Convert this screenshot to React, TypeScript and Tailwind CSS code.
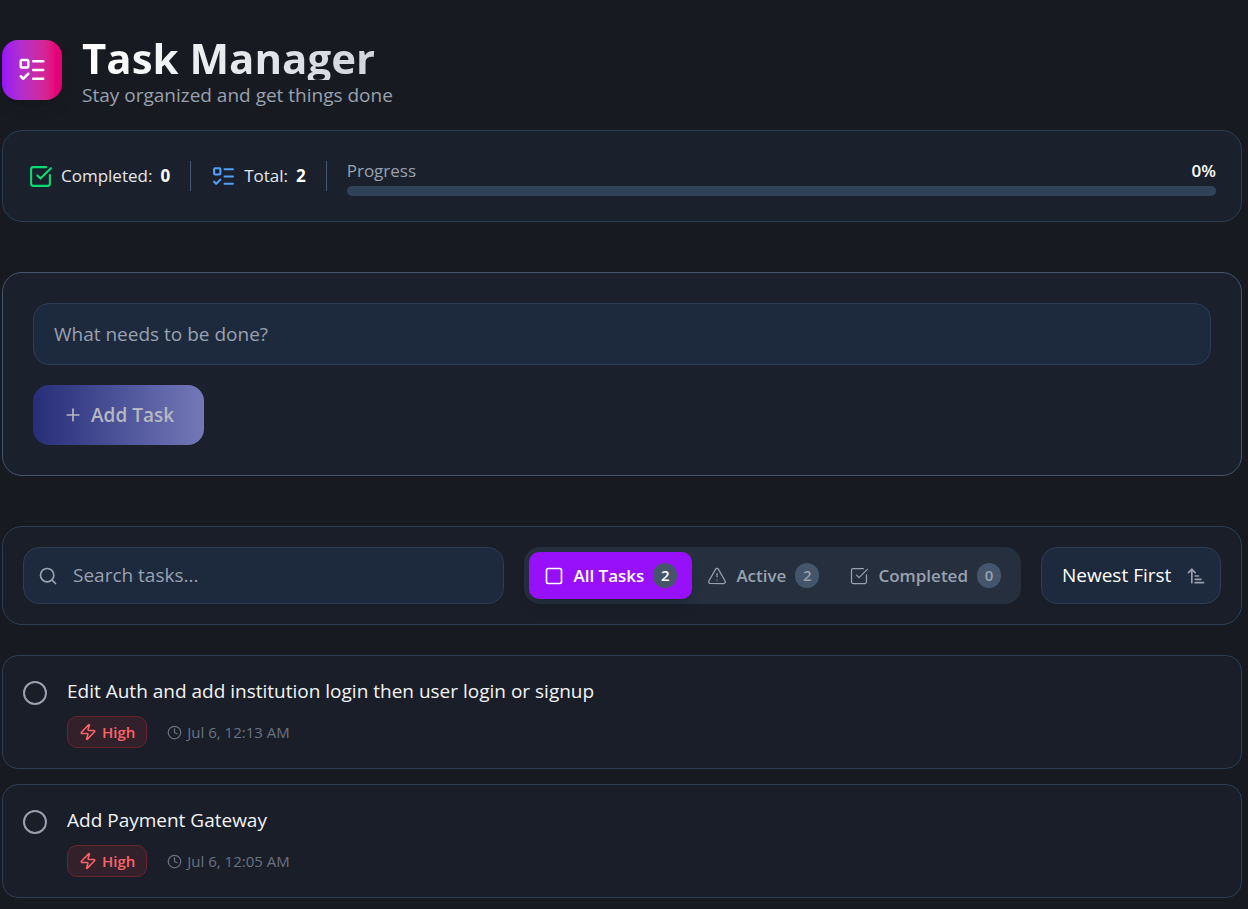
import { useState } from "react";
import {
  ArrowUpNarrowWide,
  Clock,
  ListTodo,
  Plus,
  Search,
  Square,
  SquareCheckBig,
  TriangleAlert,
  Zap,
} from "lucide-react";

type Task = { id: number; title: string; created: string; order: number; done: boolean };
type Filter = "all" | "active" | "completed";

const initialTasks: Task[] = [
  {
    id: 1,
    title: "Edit Auth and add institution login then user login or signup",
    created: "Jul 6, 12:13 AM",
    order: 2,
    done: false,
  },
  { id: 2, title: "Add Payment Gateway", created: "Jul 6, 12:05 AM", order: 1, done: false },
];

function Header() {
  return (
    <header className="flex items-start gap-5">
      <div className="mt-[5px] flex size-15 shrink-0 items-center justify-center rounded-2xl bg-linear-to-r from-[#9810fa] to-[#e60076] to-90% shadow-lg">
        <ListTodo className="size-[30px] text-white" />
      </div>
      <div>
        <h1 className="w-fit bg-linear-to-r from-white to-gray-300 bg-clip-text text-[42px] leading-[45px] font-bold text-transparent">
          Task Manager
        </h1>
        <p className="text-[19px] leading-[30px] text-[#99a1af]">Stay organized and get things done</p>
      </div>
    </header>
  );
}

function Stats({ done, total }: { done: number; total: number }) {
  const percent = total ? Math.round((done / total) * 100) : 0;
  return (
    <section className="mt-5 flex items-center gap-5 rounded-[20px] border border-[#2d3d54] bg-[#1a212d] p-[25px]">
      <div className="flex items-center gap-2 text-[17px] leading-[30px]">
        <SquareCheckBig className="size-[25px] text-[#05df72]" />
        <span className="text-gray-200">Completed:</span>
        <span className="font-bold text-white">{done}</span>
      </div>
      <div className="h-[30px] w-px bg-[#45556c]" />
      <div className="flex items-center gap-2 text-[17px] leading-[30px]">
        <ListTodo className="size-[25px] text-[#51a2ff]" />
        <span className="text-gray-200">Total:</span>
        <span className="font-bold text-white">{total}</span>
      </div>
      <div className="h-[30px] w-px bg-[#45556c]" />
      <div className="flex-1">
        <div className="flex justify-between text-[17px] leading-[30px]">
          <span className="text-[#99a1af]">Progress</span>
          <span className="font-semibold text-white">{percent}%</span>
        </div>
        <div className="h-2.5 overflow-hidden rounded-full bg-[#314158]">
          <div className="h-full bg-[#9810fa]" style={{ width: `${percent}%` }} />
        </div>
      </div>
    </section>
  );
}

export default function App() {
  const [tasks, setTasks] = useState(initialTasks);
  const [draft, setDraft] = useState("");
  const [query, setQuery] = useState("");
  const [filter, setFilter] = useState<Filter>("all");
  const [sort, setSort] = useState("newest");

  const done = tasks.filter((t) => t.done).length;
  const tabs = [
    { key: "all" as Filter, label: "All Tasks", icon: Square, count: tasks.length },
    { key: "active" as Filter, label: "Active", icon: TriangleAlert, count: tasks.length - done },
    { key: "completed" as Filter, label: "Completed", icon: SquareCheckBig, count: done },
  ];
  const visible = tasks
    .filter((t) => filter === "all" || (filter === "completed") === t.done)
    .filter((t) => t.title.toLowerCase().includes(query.toLowerCase()))
    .sort((a, b) => (sort === "newest" ? b.order - a.order : a.order - b.order));

  const addTask = () => {
    const id = Date.now();
    setTasks([...tasks, { id, title: draft.trim(), created: "Just now", order: id, done: false }]);
    setDraft("");
  };

  return (
    <main className="min-h-screen bg-[#171b21] pt-[35px] pr-1.5 pb-[11px] pl-0.5 font-['Open_Sans','Noto_Sans',sans-serif]">
      <Header />
      <Stats done={done} total={tasks.length} />

      <form
        className="mt-[50px] rounded-[20px] border border-[#45556c] bg-[#1a202c] p-[30px]"
        onSubmit={(e) => {
          e.preventDefault();
          addTask();
        }}
      >
        <input
          aria-label="New task"
          className="block h-[62px] w-full rounded-2xl border border-[#2d3d54] bg-[#1d293d] px-5 text-[19px] text-white outline-none placeholder:text-[#99a1af]"
          placeholder="What needs to be done?"
          value={draft}
          onChange={(e) => setDraft(e.target.value)}
        />
        <button
          type="submit"
          disabled={!draft.trim()}
          className="mt-5 flex h-15 items-center gap-2 rounded-2xl bg-linear-to-r from-[#372aac] to-[#a3a8ff] px-[30px] text-[19px] font-semibold text-white disabled:from-[#282d78] disabled:to-[#7478b7] disabled:text-[#b5b8c0]"
        >
          <Plus className="size-5" />
          Add Task
        </button>
      </form>

      <section className="mt-[50px] flex items-center gap-5 rounded-[20px] border border-[#2d3d54] bg-[#191e29] p-5">
        <label className="flex h-[57px] min-w-0 flex-1 items-center gap-[15px] rounded-2xl border border-[#2d3d54] bg-[#1d293d] px-3.5">
          <Search className="size-5 shrink-0 text-[#99a1af]" />
          <input
            aria-label="Search tasks"
            className="w-full min-w-0 bg-transparent text-[19px] text-white outline-none placeholder:text-[#99a1af]"
            placeholder="Search tasks..."
            value={query}
            onChange={(e) => setQuery(e.target.value)}
          />
        </label>
        <div className="flex h-[57px] rounded-2xl bg-[#252f3e] p-[5px]">
          {tabs.map(({ key, label, icon: Icon, count }) => (
            <button
              key={key}
              type="button"
              aria-pressed={filter === key}
              onClick={() => setFilter(key)}
              className={`flex items-center gap-[9px] rounded-[10px] px-[15px] text-[17px] font-semibold ${
                filter === key ? "bg-[#9810fa] text-white shadow-lg" : "text-[#99a1af]"
              }`}
            >
              <Icon className="size-5" strokeWidth={filter === key ? 2 : 1.5} />
              {label}
              <span className="min-w-6 rounded-full bg-[#45556c] px-[7px] text-center text-[15px] leading-[25px]">
                {count}
              </span>
            </button>
          ))}
        </div>
        <div className="grid h-[57px] w-[180px] items-center rounded-2xl border border-[#2d3d54] bg-[#1d293d]">
          <select
            aria-label="Sort order"
            className="col-start-1 row-start-1 h-full w-full appearance-none rounded-2xl bg-transparent pl-5 text-[19px] font-medium text-white outline-none"
            value={sort}
            onChange={(e) => setSort(e.target.value)}
          >
            <option value="newest">Newest First</option>
            <option value="oldest">Oldest First</option>
          </select>
          <ArrowUpNarrowWide className="pointer-events-none col-start-1 row-start-1 mr-3.5 size-5 justify-self-end text-[#99a1af]" />
        </div>
      </section>

      <ul className="mt-[30px] flex flex-col gap-[15px]">
        {visible.map((task) => (
          <li
            key={task.id}
            className="flex items-start gap-5 rounded-2xl border border-[#2d3d54] bg-[#191e29] p-5"
          >
            <input
              type="checkbox"
              id={`task-${task.id}`}
              checked={task.done}
              onChange={() =>
                setTasks(tasks.map((t) => (t.id === task.id ? { ...t, done: !t.done } : t)))
              }
              className="mt-[5px] size-6 shrink-0 appearance-none rounded-full border-2 border-[#99a1af] checked:border-[#05df72] checked:bg-[#05df72]"
            />
            <div>
              <label
                htmlFor={`task-${task.id}`}
                className="block text-[19px] leading-[30px] font-medium text-gray-100"
              >
                {task.title}
              </label>
              <div className="mt-2.5 flex items-center gap-5">
                <span className="flex h-8 items-center gap-[5px] rounded-[10px] border border-[#6d232c] bg-[#32212b] px-[11px] text-[15px] font-semibold text-[#ff6467]">
                  <Zap className="size-[18px]" />
                  High
                </span>
                <span className="flex items-center gap-[5px] text-[15px] text-[#6a7282]">
                  <Clock className="size-[15px]" />
                  {task.created}
                </span>
              </div>
            </div>
          </li>
        ))}
      </ul>
    </main>
  );
}
